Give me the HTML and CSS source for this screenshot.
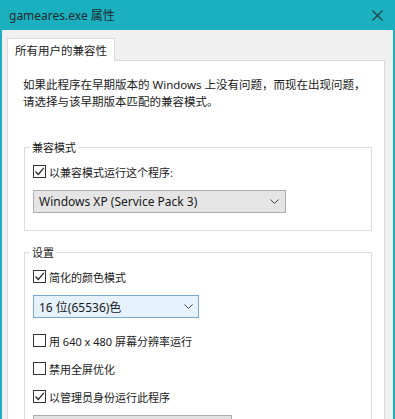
FILE: index.html
```html
<!DOCTYPE html>
<html lang="zh-CN">
<head>
  <meta charset="UTF-8" />
  <meta name="viewport" content="width=device-width, initial-scale=1.0"/>
  <title>gameares.exe 属性</title>
  <link rel="stylesheet" href="styles.css">
</head>
<body>
  <div class="window">
    <!-- 标题栏 -->
    <div class="titlebar">
      <span class="title">gameares.exe 属性</span>
      <svg class="close" width="11" height="11" viewBox="0 0 11 11">
        <path d="M0.5 0.5 L10.5 10.5 M10.5 0.5 L0.5 10.5" stroke="#2b3a3c" stroke-width="1.1" fill="none"/>
      </svg>
    </div>

    <div class="body">
      <div class="tabs">
        <div class="tab">所有用户的兼容性</div>
      </div>

      <div class="panel">
        <p class="desc">如果此程序在早期版本的 Windows 上没有问题，而现在出现问题，<br>请选择与该早期版本匹配的兼容模式。</p>

        <!-- 兼容模式 -->
        <fieldset class="group">
          <legend>兼容模式</legend>
          <label class="check">
            <span class="box"><svg width="11" height="11" viewBox="0 0 11 11"><path d="M1.5 5.5 L4.3 8.5 L9.8 1.8" stroke="#222" stroke-width="1.2" fill="none"/></svg></span>
            以兼容模式运行这个程序:
          </label>
          <div class="select select-os">
            <span>Windows XP (Service Pack 3)</span>
            <svg class="chev" width="9" height="5" viewBox="0 0 9 5"><path d="M0.5 0.5 L4.5 4.5 L8.5 0.5" stroke="#444" stroke-width="1" fill="none"/></svg>
          </div>
        </fieldset>

        <!-- 设置 -->
        <fieldset class="group group-settings">
          <legend>设置</legend>
          <label class="check">
            <span class="box"><svg width="11" height="11" viewBox="0 0 11 11"><path d="M1.5 5.5 L4.3 8.5 L9.8 1.8" stroke="#222" stroke-width="1.2" fill="none"/></svg></span>
            简化的颜色模式
          </label>
          <div class="select select-color">
            <span>16 位(65536)色</span>
            <svg class="chev" width="9" height="5" viewBox="0 0 9 5"><path d="M0.5 0.5 L4.5 4.5 L8.5 0.5" stroke="#444" stroke-width="1" fill="none"/></svg>
          </div>
          <label class="check check-first">
            <span class="box"></span>
            用 640 x 480 屏幕分辨率运行
          </label>
          <label class="check check-next">
            <span class="box"></span>
            禁用全屏优化
          </label>
          <label class="check check-next">
            <span class="box"><svg width="11" height="11" viewBox="0 0 11 11"><path d="M1.5 5.5 L4.3 8.5 L9.8 1.8" stroke="#222" stroke-width="1.2" fill="none"/></svg></span>
            以管理员身份运行此程序
          </label>
          <!-- 下一个按钮只露出上边 -->
          <div class="btn"></div>
        </fieldset>
      </div>
    </div>
  </div>
</body>
</html>
```

FILE: styles.css
```css
body {
  margin: 0;
  font-family: "Noto Sans", "Noto Sans CJK SC", sans-serif;
  color: #1a1a1a;
  background: #f0f0f0;
  overflow: hidden;
}
.window {
  width: 395px;
  height: 419px;
  box-sizing: border-box;
  border-left: 2px solid #1bb0c0;
  border-right: 2px solid #1bb0c0;
  background: #f0f0f0;
  overflow: hidden;
}
.titlebar {
  height: 30px;
  background: #1bb0c0;
  display: flex;
  align-items: center;
  justify-content: space-between;
  padding: 0 8px 0 7px;
}
.title {
  font-size: 12px;
  color: #1d2b2d;
}
.close {
  margin-right: 2px;
}
.body {
  padding: 8px 8px 0 5px;
}
.tabs {
  display: flex;
}
.tab {
  position: relative;
  z-index: 1;
  height: 22px;
  margin-bottom: -1px;
  padding: 0 7px;
  display: flex;
  align-items: center;
  font-size: 11.5px;
  background: #fff;
  border: 1px solid #d9d9d9;
  border-bottom: none;
}
.panel {
  background: #fff;
  border: 1px solid #d9d9d9;
  padding: 15px 12px 0 15px;
  height: 400px;
}
.desc {
  margin: 0 0 29px;
  font-size: 11.5px;
  line-height: 17px;
  white-space: nowrap;
}
.group {
  margin: 0 0 0 1px;
  padding: 7px 8px 17px;
  border: 1px solid #dcdcdc;
  min-width: 0;
}
.group legend {
  margin-left: -3px;
  padding: 0 2px;
  font-size: 11px;
  line-height: 17px;
}
.group-settings {
  margin-top: 13px;
}
.check {
  display: flex;
  align-items: center;
  height: 17px;
  font-size: 11px;
}
.box {
  width: 11px;
  height: 11px;
  border: 1px solid #333;
  background: #fff;
  margin-right: 3px;
  display: flex;
}
.check-first {
  margin-top: 14px;
}
.check-next {
  margin-top: 11px;
}
.select {
  margin-top: 10px;
  height: 23px;
  box-sizing: border-box;
  display: flex;
  align-items: center;
  justify-content: space-between;
  padding: 0 6px 0 5px;
  font-size: 12px;
}
.select-os {
  width: 253px;
  background: #e5e5e5;
  border: 1px solid #adadad;
}
.select-color {
  width: 166px;
  background: #e5f1fb;
  border: 1px solid #7aa7cc;
  padding-right: 5px;
}
.btn {
  margin-top: 10px;
  width: 199px;
  height: 23px;
  box-sizing: border-box;
  background: #e1e1e1;
  border: 1px solid #adadad;
}
```
